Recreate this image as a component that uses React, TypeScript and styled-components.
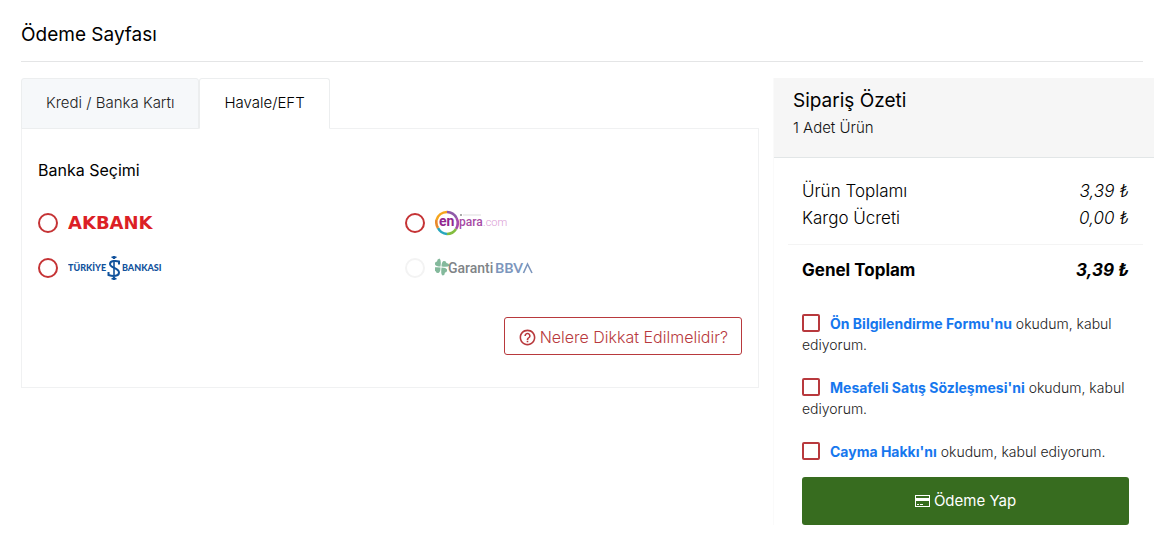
import React, { useState } from "react";
import styled, { createGlobalStyle } from "styled-components";

const GlobalStyle = createGlobalStyle`
  *, *::before, *::after { box-sizing: border-box; }
  body {
    margin: 0;
    background: #fff;
    color: #111;
    font-family: Inter, "Liberation Sans", sans-serif;
    font-size: 15px;
    font-weight: 300;
    line-height: 24px;
  }
  button, input { font: inherit; margin: 0; }
`;

const Page = styled.main`
  padding: 16px 0 16px 21px;
`;

const PageHeader = styled.header`
  margin: 0 11px 16px 0;
  padding: 4px 0 12px;
  border-bottom: 1px solid #e4e5e6;
`;

const Title = styled.h1`
  margin: 0;
  color: #000;
  font-size: 19px;
  font-weight: 400;
  line-height: 29px;
`;

const Columns = styled.div`
  display: grid;
  grid-template-columns: minmax(0, 1fr) 381px;
  gap: 14px;
  align-items: start;
`;

const TabList = styled.div`
  display: flex;
`;

const Tab = styled.button<{ $active: boolean }>`
  height: 51px;
  margin-bottom: -1px;
  padding: 0 24px 2px;
  border: 1px solid #eceeef;
  border-bottom-color: ${(p) => (p.$active ? "#fff" : "#eceeef")};
  border-radius: 3px 3px 0 0;
  background: ${(p) => (p.$active ? "#fff" : "#f6f8fa")};
  color: ${(p) => (p.$active ? "#000" : "#222")};
  cursor: pointer;
`;

const Panel = styled.div`
  padding: 29px 16px 32px;
  border: 1px solid #f0f1f2;
`;

const BankGroup = styled.fieldset`
  margin: 0;
  padding: 0;
  border: 0;
`;

const BankLegend = styled.legend`
  padding: 0;
  margin-bottom: 27px;
  color: #000;
  font-size: 16px;
  font-weight: 400;
`;

const BankGrid = styled.div`
  display: grid;
  grid-template-columns: 1fr 1fr;
  gap: 17px 30px;
`;

const BankOption = styled.label`
  display: flex;
  align-items: center;
  gap: 10px;
  height: 28px;
  cursor: pointer;
`;

const Radio = styled.input`
  appearance: none;
  width: 20px;
  height: 20px;
  border: 2px solid #c53335;
  border-radius: 50%;
  background: #fff;
  &:checked { background: radial-gradient(#c53335 45%, #fff 50%); }
  &:disabled { border-color: #f3f3f3; }
`;

const HintRow = styled.div`
  display: flex;
  justify-content: flex-end;
  margin-top: 35px;
`;

const HintButton = styled.button`
  display: flex;
  align-items: center;
  gap: 3px;
  height: 38px;
  padding: 2px 13px 0;
  border: 1px solid #b8393d;
  border-radius: 3px;
  background: #fff;
  color: #b8393d;
  font-size: 16px;
  cursor: pointer;
`;

const Summary = styled.aside`
  border-left: 1px solid #fafafa;
`;

const SummaryHeader = styled.header`
  padding: 10px 19px 17px;
  border-bottom: 1px solid #e2e6e7;
  background: #f6f6f6;
`;

const SummaryTitle = styled.h2`
  margin: 0;
  color: #000;
  font-size: 19px;
  font-weight: 400;
  line-height: 26px;
`;

const SummaryCount = styled.p`
  margin: 2px 0 0;
`;

const Totals = styled.dl`
  margin: 0 11px 0 14px;
  padding: 20px 14px 12px;
  border-bottom: 1px solid #f4f4f4;
`;

const TotalRow = styled.div<{ $strong?: boolean }>`
  display: flex;
  justify-content: space-between;
  line-height: 27px;
  color: #000;
  font-size: 17px;
  font-weight: ${(p) => (p.$strong ? 700 : 300)};
  dt, dd { margin: 0; }
  dd { font-style: italic; }
`;

const GrandTotal = styled.dl`
  margin: 0;
  padding: 12px 25px 0 28px;
`;

const Agreements = styled.form`
  display: flex;
  flex-direction: column;
  gap: 22px;
  padding: 29px 25px 0 28px;
`;

const Agreement = styled.label`
  color: #222;
  font-size: 14px;
  line-height: 21px;
`;

const Checkbox = styled.input`
  appearance: none;
  width: 18px;
  height: 18px;
  margin-right: 10px;
  border: 2px solid #b8393d;
  border-radius: 2px;
  background: #fff;
  vertical-align: -3px;
  &:checked { background: #b8393d; box-shadow: inset 0 0 0 2px #fff; }
`;

const AgreementLink = styled.a`
  color: #1677ee;
  font-weight: 700;
  text-decoration: none;
`;

const PayButton = styled.button`
  display: flex;
  align-items: center;
  justify-content: center;
  gap: 4px;
  height: 48px;
  margin-top: -7px;
  border: 0;
  border-radius: 3px;
  background: #376c1f;
  color: #fff;
  font-weight: 400;
  cursor: pointer;
`;

const AkbankLogo = () => (
  <svg width="94" height="26" viewBox="0 0 94 26">
    <text x="0" y="19" fontFamily="DejaVu Sans" fontWeight="700" fontSize="18" fill="#dc1f26">AKBANK</text>
  </svg>
);

const IsbankLogo = () => (
  <svg width="94" height="26" viewBox="0 0 94 26" fill="#11529c">
    <text x="0" y="16" fontFamily="Lato" fontWeight="900" fontSize="9">TÜRKİYE</text>
    <g fill="none" stroke="#11529c">
      <path d="M43.500 2.200h5M43.500 23.800h5M46 5.500v15" strokeWidth="1.600" />
      <path d="M46 1v3M46 22v3" strokeWidth="2.400" />
      <path d="M51 9.500V6.500C48 5.500 42 5.500 42 9c0 4 9 4 9 8.500 0 4-6 4-10.500 2.500v-3" strokeWidth="2" />
    </g>
    <text x="54" y="16" fontFamily="Lato" fontWeight="900" fontSize="9">BANKASI</text>
  </svg>
);

const EnparaLogo = () => (
  <svg width="72" height="26" viewBox="0 0 72 26">
    <g fill="none" strokeWidth="2.600">
      <path d="M1.500 10A11 11 0 0 1 12 2" stroke="#f5a51d" />
      <path d="M12 2A11 11 0 0 1 21.500 8" stroke="#8f5aa8" />
      <path d="M21.500 8A11 11 0 0 1 21 19" stroke="#a74cab" />
      <path d="M21 19A11 11 0 0 1 12 24" stroke="#83bd3f" />
      <path d="M12 24A11 11 0 0 1 3 18" stroke="#27a7bd" />
      <path d="M3 18A11 11 0 0 1 1.500 10" stroke="#e8892b" />
    </g>
    <text x="4" y="16" fontFamily="Roboto" fontWeight="700" fontSize="14" fill="#92278f">en</text>
    <text x="24" y="16" fontFamily="Roboto" fontWeight="500" fontSize="12" fill="#a74aa5">para</text>
    <text x="48" y="16" fontFamily="Roboto" fontWeight="300" fontSize="11" fill="#d99bd5">.com</text>
    <path d="M25 4h2v2h-2z" fill="#aaa" />
    <path d="M28 5h18" stroke="#ddd" />
  </svg>
);

const GarantiLogo = () => (
  <svg width="99" height="22" viewBox="0 0 99 22">
    <g fill="#84b99c">
      {[0, 90, 180, 270].map((a) => (
        <path key={a} transform={`rotate(${a} 6 10)`} d="M5.500 9.500Q1 9.500 0 7.500-.5 5 2 4.500 2 2 4.500 1.500 6.500 3 5.500 9.500Z" />
      ))}
    </g>
    <text x="13" y="16" fontFamily="Roboto" fontSize="14" fontWeight="500" fill="#808487">Garanti</text>
    <text x="60" y="16" fontFamily="Lato" fontSize="14" fontWeight="700" fill="#7c96bd">BBV</text>
    <path d="M88.500 16l4-9 4.500 9" fill="none" stroke="#7c96bd" strokeWidth="1.600" />
  </svg>
);

const HelpIcon = () => (
  <svg width="19" height="19" viewBox="0 0 24 24" fill="currentColor" aria-hidden="true">
    <path d="M11 18h2v-2h-2v2zm1-16C6.480 2 2 6.480 2 12s4.480 10 10 10 10-4.480 10-10S17.520 2 12 2zm0 18c-4.410 0-8-3.590-8-8s3.590-8 8-8 8 3.590 8 8-3.590 8-8 8zm0-14c-2.210 0-4 1.790-4 4h2c0-1.100.9-2 2-2s2 .9 2 2c0 2-3 1.750-3 5h2c0-2.250 3-2.500 3-5 0-2.210-1.790-4-4-4z" />
  </svg>
);

const CardIcon = () => (
  <svg width="15" height="12" viewBox="0 0 15 12" fill="none" stroke="currentColor" aria-hidden="true">
    <rect x=".5" y=".5" width="14" height="11" />
    <path d="M1 4.500h13" strokeWidth="3" />
    <path d="M2 9.500h2M5 9.500h3" />
  </svg>
);

const banks = [
  { id: "akbank", label: "Akbank", Logo: AkbankLogo, disabled: false },
  { id: "enpara", label: "Enpara.com", Logo: EnparaLogo, disabled: false },
  { id: "isbank", label: "Türkiye İş Bankası", Logo: IsbankLogo, disabled: false },
  { id: "garanti", label: "Garanti BBVA", Logo: GarantiLogo, disabled: true },
];

const agreements = [
  { id: "info", link: "Ön Bilgilendirme Formu'nu" },
  { id: "sales", link: "Mesafeli Satış Sözleşmesi'ni" },
  { id: "withdrawal", link: "Cayma Hakkı'nı" },
];

const tabs = ["Kredi / Banka Kartı", "Havale/EFT"];

export default function App() {
  const [activeTab, setActiveTab] = useState(1);
  return (
    <>
      <GlobalStyle />
      <Page>
        <PageHeader>
          <Title>Ödeme Sayfası</Title>
        </PageHeader>
        <Columns>
          <section>
            <TabList role="tablist">
              {tabs.map((name, i) => (
                <Tab key={name} type="button" role="tab" aria-selected={activeTab === i} $active={activeTab === i} onClick={() => setActiveTab(i)}>
                  {name}
                </Tab>
              ))}
            </TabList>
            <Panel role="tabpanel">
              <BankGroup>
                <BankLegend>Banka Seçimi</BankLegend>
                <BankGrid>
                  {banks.map(({ id, label, Logo, disabled }) => (
                    <BankOption key={id}>
                      <Radio type="radio" name="bank" value={id} aria-label={label} disabled={disabled} />
                      <Logo />
                    </BankOption>
                  ))}
                </BankGrid>
              </BankGroup>
              <HintRow>
                <HintButton type="button">
                  <HelpIcon />
                  Nelere Dikkat Edilmelidir?
                </HintButton>
              </HintRow>
            </Panel>
          </section>
          <Summary>
            <SummaryHeader>
              <SummaryTitle>Sipariş Özeti</SummaryTitle>
              <SummaryCount>1 Adet Ürün</SummaryCount>
            </SummaryHeader>
            <Totals>
              <TotalRow><dt>Ürün Toplamı</dt><dd>3,39 ₺</dd></TotalRow>
              <TotalRow><dt>Kargo Ücreti</dt><dd>0,00 ₺</dd></TotalRow>
            </Totals>
            <GrandTotal>
              <TotalRow $strong><dt>Genel Toplam</dt><dd>3,39 ₺</dd></TotalRow>
            </GrandTotal>
            <Agreements onSubmit={(e) => e.preventDefault()}>
              {agreements.map(({ id, link }) => (
                <Agreement key={id}>
                  <Checkbox type="checkbox" name={id} />
                  <AgreementLink href={`#${id}`}>{link}</AgreementLink> okudum, kabul ediyorum.
                </Agreement>
              ))}
              <PayButton type="submit">
                <CardIcon />
                Ödeme Yap
              </PayButton>
            </Agreements>
          </Summary>
        </Columns>
      </Page>
    </>
  );
}
